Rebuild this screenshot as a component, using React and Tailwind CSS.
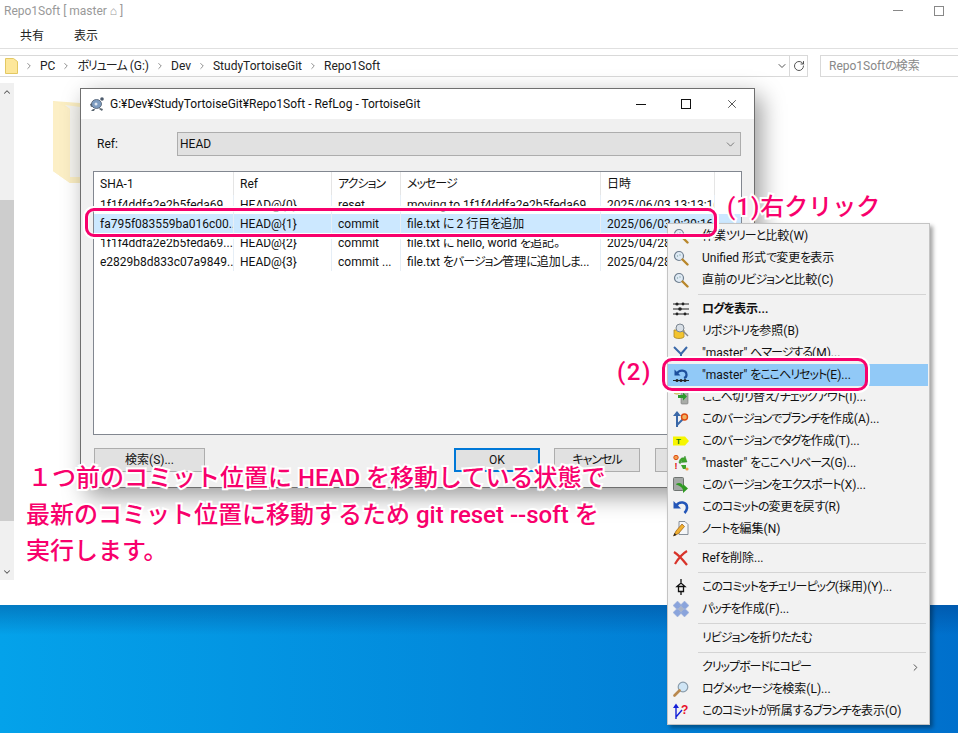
import React from 'react';
import { ChevronRight, ChevronDown, RotateCw, X } from 'lucide-react';

// Meiryo UI has narrow kana: tighten kana runs only, kanji and latin stay as they are
const Jp = ({ text }) =>
  text.split(/([\u3040-\u30ff]+)/).map((part, i) =>
    i % 2 ? <span key={i} className="tracking-[-1px]">{part}</span> : part
  );

const Magnifier = () => (
  <svg viewBox="0 0 16 16" className="w-4 h-4">
    <circle cx="6" cy="6" r="4.5" fill="#dfeaf5" stroke="#6f7f8f" strokeWidth="1.2" />
    <circle cx="4.5" cy="6" r="0.7" fill="#8aa" />
    <circle cx="7" cy="5" r="0.7" fill="#8aa" />
    <path d="M9.5 9.5L14.5 14.5" stroke="#b8862a" strokeWidth="2.4" strokeLinecap="round" />
  </svg>
);

const LogIcon = () => (
  <svg viewBox="0 0 16 16" className="w-4 h-4">
    <path d="M0 3h16M0 8h16M0 13h16" stroke="#222" strokeWidth="1" />
    <circle cx="4" cy="3" r="1.6" fill="#222" />
    <circle cx="10" cy="3" r="1.4" fill="#222" />
    <circle cx="7" cy="8" r="1.8" fill="#222" />
    <circle cx="4" cy="13" r="1.4" fill="#222" />
    <circle cx="12" cy="13" r="1.4" fill="#222" />
  </svg>
);

const RepoIcon = () => (
  <svg viewBox="0 0 16 16" className="w-4 h-4">
    <path d="M1 7h10v7c-2 2-8 2-10 0z" fill="#f3c42e" stroke="#a8862a" strokeWidth="0.8" />
    <circle cx="7" cy="5" r="4" fill="#d8dfe6" stroke="#7b8590" strokeWidth="1" />
    <path d="M10 8l5 5" stroke="#888" strokeWidth="1.4" />
  </svg>
);

const MergeIcon = () => (
  <svg viewBox="0 0 16 16" className="w-4 h-4">
    <path d="M1 2l7 7 6-7M8 9v6" fill="none" stroke="#3a68a8" strokeWidth="2" />
  </svg>
);

const ResetIcon = () => (
  <svg viewBox="0 0 16 16" className="w-4 h-4">
    <path d="M4 6.5C6 2.5 13 2.5 13.5 7.5c.2 2-1 3-2.5 3.5" fill="none" stroke="#1d4f9c" strokeWidth="2.2" />
    <path d="M1.5 2.5v6h6z" fill="#1d4f9c" />
    <path d="M0 13.5h16" stroke="#222" strokeWidth="1" />
    <circle cx="4" cy="13.5" r="1.5" fill="#222" />
    <circle cx="8" cy="13.5" r="1.5" fill="#222" />
    <circle cx="12" cy="13.5" r="1.5" fill="#222" />
  </svg>
);

const SwitchIcon = () => (
  <svg viewBox="0 0 16 16" className="w-4 h-4">
    <rect x="8" y="3" width="7" height="12" rx="1" fill="#a9aca8" stroke="#777" strokeWidth="0.6" />
    <ellipse cx="4" cy="3" rx="3.2" ry="2.2" fill="#e8d878" stroke="#a89a40" strokeWidth="0.6" />
    <path d="M5 6h5V3.5l4 4-4 4V9H5z" fill="#2c9a2c" />
  </svg>
);

const BranchIcon = () => (
  <svg viewBox="0 0 16 16" className="w-4 h-4">
    <path d="M4 16V3" stroke="#3a68a8" strokeWidth="2" />
    <path d="M4 0l4 5H0z" fill="#3a68a8" />
    <path d="M4 14l6-6" stroke="#3a68a8" strokeWidth="2" />
    <circle cx="11.5" cy="6" r="3" fill="#f0b060" stroke="#e04a10" strokeWidth="1.4" />
  </svg>
);

const TagIcon = () => (
  <svg viewBox="0 0 16 16" className="w-4 h-4">
    <path d="M0 3.5h12l4 4.5-4 4.5H0z" fill="#f6f600" />
    <text x="3" y="11" fontSize="8" fontWeight="700" fill="#1a7a1a" fontFamily="Liberation Sans">T</text>
  </svg>
);

const RebaseIcon = () => (
  <svg viewBox="0 0 16 16" className="w-4 h-4">
    <circle cx="3" cy="2.5" r="2.2" fill="#f0a050" stroke="#e04a10" strokeWidth="1" />
    <text x="1.5" y="14" fontSize="9" fontWeight="700" fill="#e01010" fontFamily="Liberation Sans">!</text>
    <path d="M6 8c0-4 3-6 5-5l1-2 2 6-6 .5 1.500-2c-1 0-2 1-2 3z" fill="#3ea52a" stroke="#1f7a1a" strokeWidth="0.4" />
    <path d="M8 10l5 0 0 4-3 0z" fill="#3ea52a" />
    <circle cx="14" cy="14" r="1.6" fill="#f0a050" />
  </svg>
);

const ExportIcon = () => (
  <svg viewBox="0 0 16 16" className="w-4 h-4">
    <rect x="0.500" y="0.500" width="10" height="13" rx="1" fill="#a4a8a6" stroke="#6f7471" />
    <path d="M3 7c3-2 6-1 7 2V7l5 4.500-5 4.500v-3c-1-3-3-4-7-5.500z" fill="#2f9a22" />
  </svg>
);

const RevertIcon = () => (
  <svg viewBox="0 0 16 16" className="w-4 h-4">
    <path d="M3.500 6.500C6 2 14 2.500 14 8.500c0 2.500-1 4-2.500 5.500" fill="none" stroke="#2456b8" strokeWidth="2.600" />
    <path d="M0.500 2v7.500h7.500z" fill="#2456b8" />
  </svg>
);

const NoteIcon = () => (
  <svg viewBox="0 0 16 16" className="w-4 h-4">
    <path d="M6 0.500h6l3 3v10H6z" fill="#f4f6f8" stroke="#7b8590" strokeWidth="0.9" />
    <path d="M9 3L3 10l-2.500 5 5-2.500 6-7z" fill="#f0b030" stroke="#9a5a10" strokeWidth="0.7" />
    <path d="M0.500 15l1-3 2 2z" fill="#222" />
  </svg>
);

const DeleteIcon = () => (
  <svg viewBox="0 0 16 16" className="w-4 h-4">
    <path d="M1 2c5 3 9 8 13 13M14 1C9 4 5 9 2 14" fill="none" stroke="#d8332a" strokeWidth="2.200" />
  </svg>
);

const CherryIcon = () => (
  <svg viewBox="0 0 16 16" className="w-4 h-4">
    <path d="M8 0v3.500M4 7.500L8 4l4 3.500H4zM5.500 7.500v5h5v-5M8 12.500V16" fill="none" stroke="#111" strokeWidth="1.300" />
  </svg>
);

const PatchIcon = () => (
  <svg viewBox="0 0 16 16" className="w-4 h-4">
    <path d="M4.500 0L9 4.500 4.500 9 0 4.500zM11.500 0L16 4.500 11.500 9 7 4.500zM4.500 7L9 11.500 4.500 16 0 11.500zM11.500 7L16 11.500 11.500 16 7 11.500z" fill="#8aa4dc" stroke="#a8b8d8" strokeWidth="0.5" />
    <path d="M8 5l3 3-3 3-3-3z" fill="#aab4c8" />
  </svg>
);

const FindIcon = () => (
  <svg viewBox="0 0 16 16" className="w-4 h-4">
    <circle cx="10" cy="6" r="4.800" fill="#cfe5f5" stroke="#8a9cab" strokeWidth="1.200" />
    <path d="M6.500 9.500L1.500 14.500" stroke="#b9884e" strokeWidth="2.600" strokeLinecap="round" />
  </svg>
);

const ContainsIcon = () => (
  <svg viewBox="0 0 16 16" className="w-4 h-4">
    <path d="M3 16V4M3 14l6-7" stroke="#1420d8" strokeWidth="1.400" fill="none" />
    <path d="M3 0.500L6 5H0z" fill="#1420d8" />
    <text x="8" y="11" fontSize="12" fontWeight="700" fill="#e8102a" fontFamily="Liberation Sans">?</text>
  </svg>
);

const TortoiseIcon = () => (
  <svg viewBox="0 0 16 16" className="w-4 h-4">
    <path d="M1 8l3-1 1 3-3 1zM11 12l3 1-1 2-3-2zM4 13l-2 2 3 0 1-2z" fill="#5a6670" />
    <ellipse cx="7.500" cy="8" rx="5" ry="4.500" fill="#7d9cc0" stroke="#4c5a6c" strokeWidth="0.8" />
    <circle cx="13" cy="3" r="1.800" fill="#4c5a6c" />
    <circle cx="7" cy="8" r="1.500" fill="#dfe6ef" />
  </svg>
);

const menuGroups = [
  [
    { label: '作業ツリーと比較(W)', icon: Magnifier },
    { label: 'Unified 形式で変更を表示', icon: Magnifier },
    { label: '直前のリビジョンと比較(C)', icon: Magnifier },
  ],
  [
    { label: 'ログを表示...', icon: LogIcon, bold: true },
    { label: 'リポジトリを参照(B)', icon: RepoIcon },
    { label: '"master" へマージする(M)...', icon: MergeIcon },
    { label: '"master" をここへリセット(E)...', icon: ResetIcon, active: true },
    { label: 'ここへ切り替え/チェックアウト(I)...', icon: SwitchIcon },
    { label: 'このバージョンでブランチを作成(A)...', icon: BranchIcon },
    { label: 'このバージョンでタグを作成(T)...', icon: TagIcon },
    { label: '"master" をここへリベース(G)...', icon: RebaseIcon },
    { label: 'このバージョンをエクスポート(X)...', icon: ExportIcon },
    { label: 'このコミットの変更を戻す(R)', icon: RevertIcon },
    { label: 'ノートを編集(N)', icon: NoteIcon },
  ],
  [{ label: 'Refを削除...', icon: DeleteIcon }],
  [
    { label: 'このコミットをチェリーピック(採用)(Y)...', icon: CherryIcon },
    { label: 'パッチを作成(F)...', icon: PatchIcon },
  ],
  [{ label: 'リビジョンを折りたたむ' }],
  [
    { label: 'クリップボードにコピー', arrow: true },
    { label: 'ログメッセージを検索(L)...', icon: FindIcon },
    { label: 'このコミットが所属するブランチを表示(O)', icon: ContainsIcon },
  ],
];

const rows = [
  ['1f1f4ddfa2e2b5feda69...', 'HEAD@{0}', 'reset', 'moving to 1f1f4ddfa2e2b5feda69', '2025/06/03 13:13:16'],
  ['fa795f083559ba016c00...', 'HEAD@{1}', 'commit', 'file.txt に 2 行目を追加', '2025/06/03 9:39:16'],
  ['1f1f4ddfa2e2b5feda69...', 'HEAD@{2}', 'commit', 'file.txt に hello, world を追記。', '2025/04/28 17:02:41'],
  ['e2829b8d833c07a9849...', 'HEAD@{3}', 'commit ...', 'file.txt をバージョン管理に追加しま...', '2025/04/28 16:50:08'],
];

const headers = ['SHA-1', 'Ref', 'アクション', 'メッセージ', '日時', ''];
const crumbs = ['PC', 'ボリューム (G:)', 'Dev', 'StudyTortoiseGit', 'Repo1Soft'];

const MenuItem = ({ item }) => {
  const Icon = item.icon;
  return (
    <div className={`h-[22px] flex items-center mr-px ${item.active ? 'bg-[#91c9f7]' : ''}`}>
      <div className="w-[16px] h-[16px] ml-[5px] shrink-0">{Icon && <Icon />}</div>
      <span className={`ml-[13px] flex-1 whitespace-nowrap ${item.bold ? 'font-semibold' : ''}`}><Jp text={item.label} /></span>
      {item.arrow && <ChevronRight size={11} className="mr-[7px] text-[#444]" />}
    </div>
  );
};

const ContextMenu = () => (
  <div className="absolute left-[667px] top-[223px] w-[263px] h-[502px] pt-px bg-[#f2f2f2] border border-[#c4c4c4] shadow-[3px_3px_4px_rgba(0,0,0,0.35)] text-xs text-[#111]">
    {menuGroups.map((group, i) => (
      <div key={i}>
        {i > 0 && (
          <div className="h-[7px] flex items-center pl-[30px] pr-[3px]">
            <div className="h-px w-full bg-[#d4d4d4]" />
          </div>
        )}
        {group.map((item) => (
          <MenuItem key={item.label} item={item} />
        ))}
      </div>
    ))}
  </div>
);

const DialogButton = ({ children, className = '' }) => (
  <button className={`h-[24px] bg-[#e1e1e1] border text-xs text-[#111] ${className}`}>{children}</button>
);

const RefLogDialog = () => (
  <div className="absolute left-[80px] top-[88px] w-[675px] h-[400px] flex flex-col bg-[#f0f0f0] border border-[#6f6f6f] shadow-[6px_8px_22px_rgba(0,0,0,0.4)] text-xs text-[#111]">
    <div className="h-[30px] bg-white flex items-center shrink-0">
      <div className="ml-[8px]"><TortoiseIcon /></div>
      <span className="ml-[5px]">G:¥Dev¥StudyTortoiseGit¥Repo1Soft - RefLog - TortoiseGit</span>
      <div className="ml-auto flex items-center mr-[15px]">
        <div className="w-[10px] h-px bg-[#111]" />
        <div className="ml-[35px] w-[10px] h-[10px] border border-[#111]" />
        <X size={14} strokeWidth={1.2} className="ml-[34px]" />
      </div>
    </div>

    <div className="flex items-center mt-[13px] ml-[16px] mr-[13px] shrink-0">
      <span className="w-[80px]">Ref:</span>
      <div className="flex-1 h-[24px] bg-[#e1e1e1] border border-[#adadad] flex items-center justify-between pl-[2px] pr-[3px]">
        <span>HEAD</span>
        <ChevronDown size={13} strokeWidth={1.2} className="text-[#444]" />
      </div>
    </div>

    <div className="mt-[15px] mx-[12px] h-[264px] shrink-0 bg-white border border-[#828790] overflow-hidden">
      <div className="grid grid-cols-[140px_98px_69px_200px_114px_1fr] h-[23px] items-stretch">
        {headers.map((h, i) => (
          <div key={i} className="flex items-center pl-[6px] border-r border-[#e5e5e5] last:border-r-0"><span><Jp text={h} /></span></div>
        ))}
      </div>
      {rows.map((row, i) => (
        <div key={i} className={`grid grid-cols-[140px_98px_69px_200px_114px_1fr] h-[19px] ${i === 1 ? 'bg-[#cce8ff]' : ''}`}>
          {row.map((cell, j) => (
            <div key={j} className="flex items-center pl-[6px] whitespace-nowrap overflow-hidden border-r border-[#e6eef6]"><span><Jp text={cell} /></span></div>
          ))}
          <div />
        </div>
      ))}
    </div>

    <div className="flex mt-[13px] mx-[13px] shrink-0">
      <DialogButton className="w-[111px] border-[#adadad]">検索(S)...</DialogButton>
      <DialogButton className="w-[86px] ml-[249px] border-2 border-[#0078d7]">OK</DialogButton>
      <DialogButton className="w-[86px] ml-[14px] border-[#adadad]"><Jp text="キャンセル" /></DialogButton>
      <DialogButton className="w-[86px] ml-[15px] border-[#adadad]"><Jp text="ヘルプ" /></DialogButton>
    </div>
  </div>
);

const Explorer = () => (
  <div className="h-[605px] bg-white flex flex-col text-xs text-[#222]">
    <div className="h-[21px] flex items-center pl-[4px] text-[#999]">
      Repo1Soft [ master ⌂ ]
      <div className="ml-auto flex items-center mr-[14px]">
        <div className="w-[10px] h-px bg-[#888]" />
        <div className="ml-[31px] w-[10px] h-[10px] border border-[#888]" />
      </div>
    </div>
    <div className="h-[28px] flex items-center gap-[30px] pl-[20px] border-b border-[#e0e0e0] pt-[2px]">
      <span>共有</span>
      <span>表示</span>
    </div>
    <div className="flex mt-[6px] h-[22px] shrink-0">
      <div className="w-[808px] flex items-center border border-[#d9d9d9] border-l-0">
        <svg viewBox="0 0 13 16" className="w-[13px] h-[16px] ml-[5px]">
          <path d="M0.500 0.500h8l4 3v12h-12z" fill="#fde79a" stroke="#e3c862" />
        </svg>
        <div className="flex items-center ml-[6px]">
          {crumbs.map((c) => (
            <React.Fragment key={c}>
              <ChevronRight size={10} className="mr-[6px] text-[#777]" />
              <span className="mr-[6px]"><Jp text={c} /></span>
            </React.Fragment>
          ))}
        </div>
        <ChevronDown size={12} className="ml-auto mr-[1px] text-[#555]" />
        <div className="h-full w-[18px] flex items-center justify-center border-l border-[#d9d9d9]">
          <RotateCw size={12} className="text-[#555]" />
        </div>
      </div>
      <div className="flex-1 ml-[12px] flex items-center pl-[8px] border border-[#d9d9d9] border-r-0 text-[#888]"><span><Jp text="Repo1Softの検索" /></span></div>
    </div>
    <div className="flex flex-1 mt-[6px] min-h-0">
      <div className="w-[14px] h-[497px] bg-[#f0f0f0] flex flex-col items-center text-[#555]">
        <div className="h-[17px] flex items-center"><ChevronDown size={10} strokeWidth={2.5} className="rotate-180" /></div>
        <div className="mt-[100px] h-[321px] w-full bg-[#cdcdcd]" />
        <div className="mt-auto h-[17px] flex items-center"><ChevronDown size={10} strokeWidth={2.5} /></div>
      </div>
      <svg viewBox="0 0 27 82" className="ml-[39px] mt-[18px] w-[27px] h-[82px]">
        <path d="M0 0L27 2V82H17L0 70z" fill="#fbeec2" />
        <path d="M12 4L27 6V76H17V8z" fill="#f4f3ee" />
        <path d="M0 0L17 8V82L0 70z" fill="#fcefc6" />
      </svg>
    </div>
  </div>
);

const Callouts = () => (
  <>
    <div className="absolute left-[85px] top-[208px] w-[632px] h-[29px] rounded-[9px] border-[3px] border-[#f8006c] shadow-[0_0_0_2px_white,inset_0_0_0_1px_rgba(255,255,255,0.6)]" />
    <div className="absolute left-[662px] top-[358px] w-[206px] h-[33px] rounded-[10px] border-[3px] border-[#f8006c] shadow-[0_0_0_2px_white]" />
    <div className="absolute left-[727px] top-[190px] text-[24px] leading-[34px] font-medium whitespace-nowrap text-[#f8006c] [font-feature-settings:normal] [-webkit-text-stroke:4px_white] [paint-order:stroke_fill]"><span className="tracking-[1px]">(1)</span>右クリック</div>
    <div className="absolute left-[617px] top-[357px] text-[24px] leading-[30px] font-medium whitespace-nowrap text-[#f8006c] [font-feature-settings:normal] tracking-[1.5px]">(2)</div>
    <div className="absolute left-[26px] top-[460px] text-[24px] leading-[36.500px] font-medium whitespace-nowrap text-[#f8006c] [font-feature-settings:normal] [-webkit-text-stroke:4px_white] [paint-order:stroke_fill]">
      <p className="pl-[2px]">１つ前のコミット位置に HEAD を移動している状態で</p>
      <p>最新のコミット位置に移動するため git reset --soft を</p>
      <p>実行します。</p>
    </div>
  </>
);

export default function App() {
  return (
    <div className="relative w-[958px] h-[733px] overflow-hidden flex flex-col font-['Roboto','Noto_Sans_CJK_JP',sans-serif] [font-feature-settings:'palt']">
      <Explorer />
      <div className="flex-1 bg-[linear-gradient(to_bottom,rgba(0,50,120,0.35),transparent_30px),linear-gradient(to_right,#04a2ea,#0070cc)]" />
      <RefLogDialog />
      <ContextMenu />
      <Callouts />
    </div>
  );
}
